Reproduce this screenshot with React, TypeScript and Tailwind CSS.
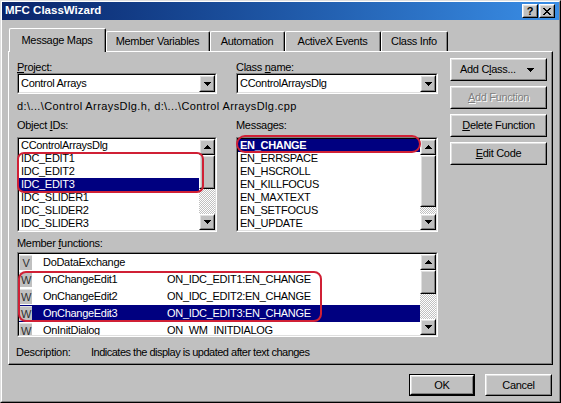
import React from "react";

type Kids = { className?: string; innerClassName?: string; children?: React.ReactNode };

function Raised({ className = "", innerClassName = "", children }: Kids) {
  return (
    <div className={`border border-t-white border-l-white border-r-black border-b-black bg-[#c0c0c0] ${className}`}>
      <div className={`h-full w-full border border-t-[#dfdfdf] border-l-[#dfdfdf] border-r-[#808080] border-b-[#808080] flex items-center justify-center ${innerClassName}`}>
        {children}
      </div>
    </div>
  );
}

function Sunken({ className = "", children }: Kids) {
  return (
    <div className={`border border-t-[#808080] border-l-[#808080] border-r-white border-b-white ${className}`}>
      <div className="h-full w-full border border-t-black border-l-black border-r-[#dfdfdf] border-b-[#dfdfdf] bg-white flex overflow-hidden">
        {children}
      </div>
    </div>
  );
}

function Arrow({ dir }: { dir: "up" | "down" }) {
  const rows = dir === "up" ? [0, 1, 2, 3] : [3, 2, 1, 0];
  return (
    <svg width="7" height="4" viewBox="0 0 7 4" shapeRendering="crispEdges">
      {rows.map((w, i) => (
        <rect key={i} x={3 - w} y={i} width={w * 2 + 1} height={1} fill="#000" />
      ))}
    </svg>
  );
}

function Scrollbar({ thumbClass }: { thumbClass: string }) {
  return (
    <div className="w-[16px] shrink-0 flex flex-col">
      <Raised className="h-[16px] shrink-0">
        <Arrow dir="up" />
      </Raised>
      <Raised className={`shrink-0 ${thumbClass}`} />
      <div className="flex-1 bg-[repeating-conic-gradient(#c0c0c0_0%_25%,#ffffff_0%_50%)] bg-[length:2px_2px]" />
      <Raised className="h-[16px] shrink-0">
        <Arrow dir="down" />
      </Raised>
    </div>
  );
}

function Combo({ value }: { value: string }) {
  return (
    <Sunken className="h-[21px] w-full">
      <div className="flex-1 pl-[2px] flex items-center whitespace-nowrap">{value}</div>
      <Raised className="w-[16px] h-full shrink-0">
        <Arrow dir="down" />
      </Raised>
    </Sunken>
  );
}

function Btn({ children, className = "" }: Kids) {
  return (
    <Raised className={`h-[23px] w-full shrink-0 ${className}`}>
      <span>{children}</span>
    </Raised>
  );
}

const objectIds = [
  "CControlArraysDlg",
  "IDC_EDIT1",
  "IDC_EDIT2",
  "IDC_EDIT3",
  "IDC_SLIDER1",
  "IDC_SLIDER2",
  "IDC_SLIDER3",
];

const messages = [
  "EN_CHANGE",
  "EN_ERRSPACE",
  "EN_HSCROLL",
  "EN_KILLFOCUS",
  "EN_MAXTEXT",
  "EN_SETFOCUS",
  "EN_UPDATE",
];

const members = [
  { k: "V", name: "DoDataExchange", map: "" },
  { k: "W", name: "OnChangeEdit1", map: "ON_IDC_EDIT1:EN_CHANGE" },
  { k: "W", name: "OnChangeEdit2", map: "ON_IDC_EDIT2:EN_CHANGE" },
  { k: "W", name: "OnChangeEdit3", map: "ON_IDC_EDIT3:EN_CHANGE" },
  { k: "W", name: "OnInitDialog", map: "ON_WM_INITDIALOG" },
];

const tabs = [
  { label: "Message Maps", w: "w-[97px]" },
  { label: "Member Variables", w: "w-[104px]" },
  { label: "Automation", w: "w-[75px]" },
  { label: "ActiveX Events", w: "w-[96px]" },
  { label: "Class Info", w: "w-[67px]" },
];

export default function App() {
  return (
    <div className="w-[561px] h-[403px] bg-[#c0c0c0] text-black text-[11px] tracking-[-0.3px] font-['Liberation_Sans',Arial,sans-serif] select-none">
      <div className="w-full h-full border border-t-[#dfdfdf] border-l-[#dfdfdf] border-r-black border-b-black">
        <div className="w-full h-full border border-t-white border-l-white border-r-[#808080] border-b-[#808080] flex flex-col">
          {/* Title bar */}
          <div className="h-[18px] shrink-0 bg-gradient-to-r from-[#0a246a] to-[#3a8ee6] flex items-center pl-[3px] pr-[4px]">
            <span className="text-white font-bold text-[11.5px] tracking-normal flex-1">MFC ClassWizard</span>
            <div className="flex gap-[1px]">
              <Raised className="w-[16px] h-[14px]">
                <span className="font-bold text-[11px] leading-none tracking-normal">?</span>
              </Raised>
              <Raised className="w-[16px] h-[14px]">
                <svg width="8" height="7" viewBox="0 0 8 7" shapeRendering="crispEdges">
                  {[0, 1, 2, 3, 4, 5, 6].map((i) => (
                    <g key={i}>
                      <rect x={i} y={i} width={2} height={1} fill="#000" />
                      <rect x={6 - i} y={i} width={2} height={1} fill="#000" />
                    </g>
                  ))}
                </svg>
              </Raised>
            </div>
          </div>

          {/* Tab strip */}
          <div className="mt-[8px] ml-[7px] h-[23px] flex items-end relative z-10">
            {tabs.map((t, i) =>
              i === 0 ? (
                <div
                  key={t.label}
                  className={`${t.w} h-[24px] -mb-[1px] bg-[#c0c0c0] border-t border-l border-r border-t-white border-l-white border-r-black rounded-t-[2px] flex`}
                >
                  <div className="flex-1 border-r border-r-[#808080] flex items-center justify-center pb-[1px]">
                    {t.label}
                  </div>
                </div>
              ) : (
                <div
                  key={t.label}
                  className={`${t.w} h-[20px] bg-[#c0c0c0] border-t border-l border-r border-t-white border-l-white border-r-black rounded-t-[2px] flex`}
                >
                  <div className="flex-1 border-r border-r-[#808080] flex items-center justify-center">{t.label}</div>
                </div>
              )
            )}
          </div>

          {/* Panel */}
          <div className="ml-[6px] w-[545px] h-[314px] border border-t-white border-l-white border-r-black border-b-black">
            <div className="w-full h-full border-r border-b border-r-[#808080] border-b-[#808080] flex pl-[8px] pt-[6px]">
              {/* Left block */}
              <div className="w-[421px] mt-[3px] flex flex-col">
                <div className="grid grid-cols-[200px_202px] gap-x-[19px]">
                  <div className="flex flex-col">
                    <div className="h-[12px] leading-[12px]">
                      <span className="underline underline-offset-1">P</span>roject:
                    </div>
                    <Combo value="Control Arrays" />
                  </div>
                  <div className="flex flex-col">
                    <div className="h-[12px] leading-[12px]">
                      Class <span className="underline underline-offset-1">n</span>ame:
                    </div>
                    <Combo value="CControlArraysDlg" />
                  </div>
                </div>
                <div className="mt-[6px] h-[12px] leading-[12px] whitespace-nowrap tracking-[0.4px]">
                  d:\...\Control ArraysDlg.h, d:\...\Control ArraysDlg.cpp
                </div>

                <div className="mt-[7px] grid grid-cols-[200px_202px] gap-x-[19px]">
                  <div className="flex flex-col">
                    <div className="h-[12px] leading-[12px]">
                      Object <span className="underline underline-offset-1">I</span>Ds:
                    </div>
                    <div className="relative mt-[6px]">
                      <Sunken className="h-[95px] w-full">
                        <div className="flex-1 flex flex-col">
                          {objectIds.map((o, i) => (
                            <div
                              key={o}
                              className={`h-[13px] leading-[13px] pl-[2px] whitespace-nowrap ${i === 3 ? "bg-[#000080] text-white" : ""}`}
                            >
                              {o}
                            </div>
                          ))}
                        </div>
                        <Scrollbar thumbClass="h-[34px]" />
                      </Sunken>
                      <div className="absolute left-0 top-[15px] w-[187px] h-[41px] border-2 border-[#d02035] rounded-[7px] pointer-events-none" />
                    </div>
                  </div>
                  <div className="flex flex-col">
                    <div className="h-[12px] leading-[12px]">Messages:</div>
                    <div className="relative mt-[6px]">
                      <Sunken className="h-[95px] w-full">
                        <div className="flex-1 flex flex-col">
                          {messages.map((m, i) => (
                            <div
                              key={m}
                              className={`h-[13px] leading-[13px] pl-[2px] whitespace-nowrap ${i === 0 ? "bg-[#000080] text-white font-bold" : ""}`}
                            >
                              {m}
                            </div>
                          ))}
                        </div>
                        <Scrollbar thumbClass="h-[52px]" />
                      </Sunken>
                      <div className="absolute left-0 -top-[2px] w-[185px] h-[18px] border-2 border-[#d02035] rounded-[9px] pointer-events-none" />
                    </div>
                  </div>
                </div>

                <div className="mt-[5px] h-[12px] leading-[12px]">
                  Member <span className="underline underline-offset-1">f</span>unctions:
                </div>
                <div className="relative mt-[3px]">
                  <Sunken className="h-[85px] w-full">
                    <div className="flex-1 flex flex-col">
                      {members.map((m, i) => (
                        <div
                          key={m.name}
                          className={`h-[17px] shrink-0 flex items-center whitespace-nowrap ${i === 3 ? "bg-[#000080] text-white" : ""}`}
                        >
                          <div className="w-[13px] h-[15px] shrink-0 bg-[#c0c0c0] text-[#303030] flex items-center justify-center border-t border-l border-t-[#e0e0e0] border-l-[#e0e0e0]">
                            {m.k}
                          </div>
                          <div className="w-[135px] pl-[11px] shrink-0">{m.name}</div>
                          <div>{m.map}</div>
                        </div>
                      ))}
                    </div>
                    <Scrollbar thumbClass="h-[24px]" />
                  </Sunken>
                  <div className="absolute left-[1px] top-[19px] w-[304px] h-[51px] border-2 border-[#d02035] rounded-[8px] pointer-events-none" />
                </div>

                <div className="mt-[9px] h-[12px] leading-[12px] flex whitespace-nowrap">
                  <span className="w-[75px] -ml-[1px]">Description:</span>
                  <span className="tracking-[-0.5px]">Indicates the display is updated after text changes</span>
                </div>
              </div>

              {/* Right buttons */}
              <div className="ml-[12px] w-[97px] flex flex-col gap-[5px]">
                <Raised className="h-[23px] w-full shrink-0" innerClassName="justify-start pl-[8px]">
                  <span>
                    Add C<span className="underline underline-offset-1">l</span>ass...
                  </span>
                  <svg className="ml-[11px]" width="7" height="4" viewBox="0 0 7 4" shapeRendering="crispEdges">
                    {[3, 2, 1, 0].map((w, i) => (
                      <rect key={i} x={3 - w} y={i} width={w * 2 + 1} height={1} fill="#000" />
                    ))}
                  </svg>
                </Raised>
                <Btn>
                  <span className="text-[#808080] [text-shadow:1px_1px_#ffffff]">
                    <span className="underline underline-offset-1">A</span>dd Function
                  </span>
                </Btn>
                <Btn>
                  <span className="underline underline-offset-1">D</span>elete Function
                </Btn>
                <Btn>
                  <span className="underline underline-offset-1">E</span>dit Code
                </Btn>
              </div>
            </div>
          </div>

          {/* Bottom buttons */}
          <div className="mt-[9px] pr-[7px] flex justify-end gap-[10px]">
            <div className="w-[66px] h-[22px] border border-black">
              <Raised className="w-full h-full">OK</Raised>
            </div>
            <Raised className="w-[67px] h-[22px]">Cancel</Raised>
          </div>
        </div>
      </div>
    </div>
  );
}
